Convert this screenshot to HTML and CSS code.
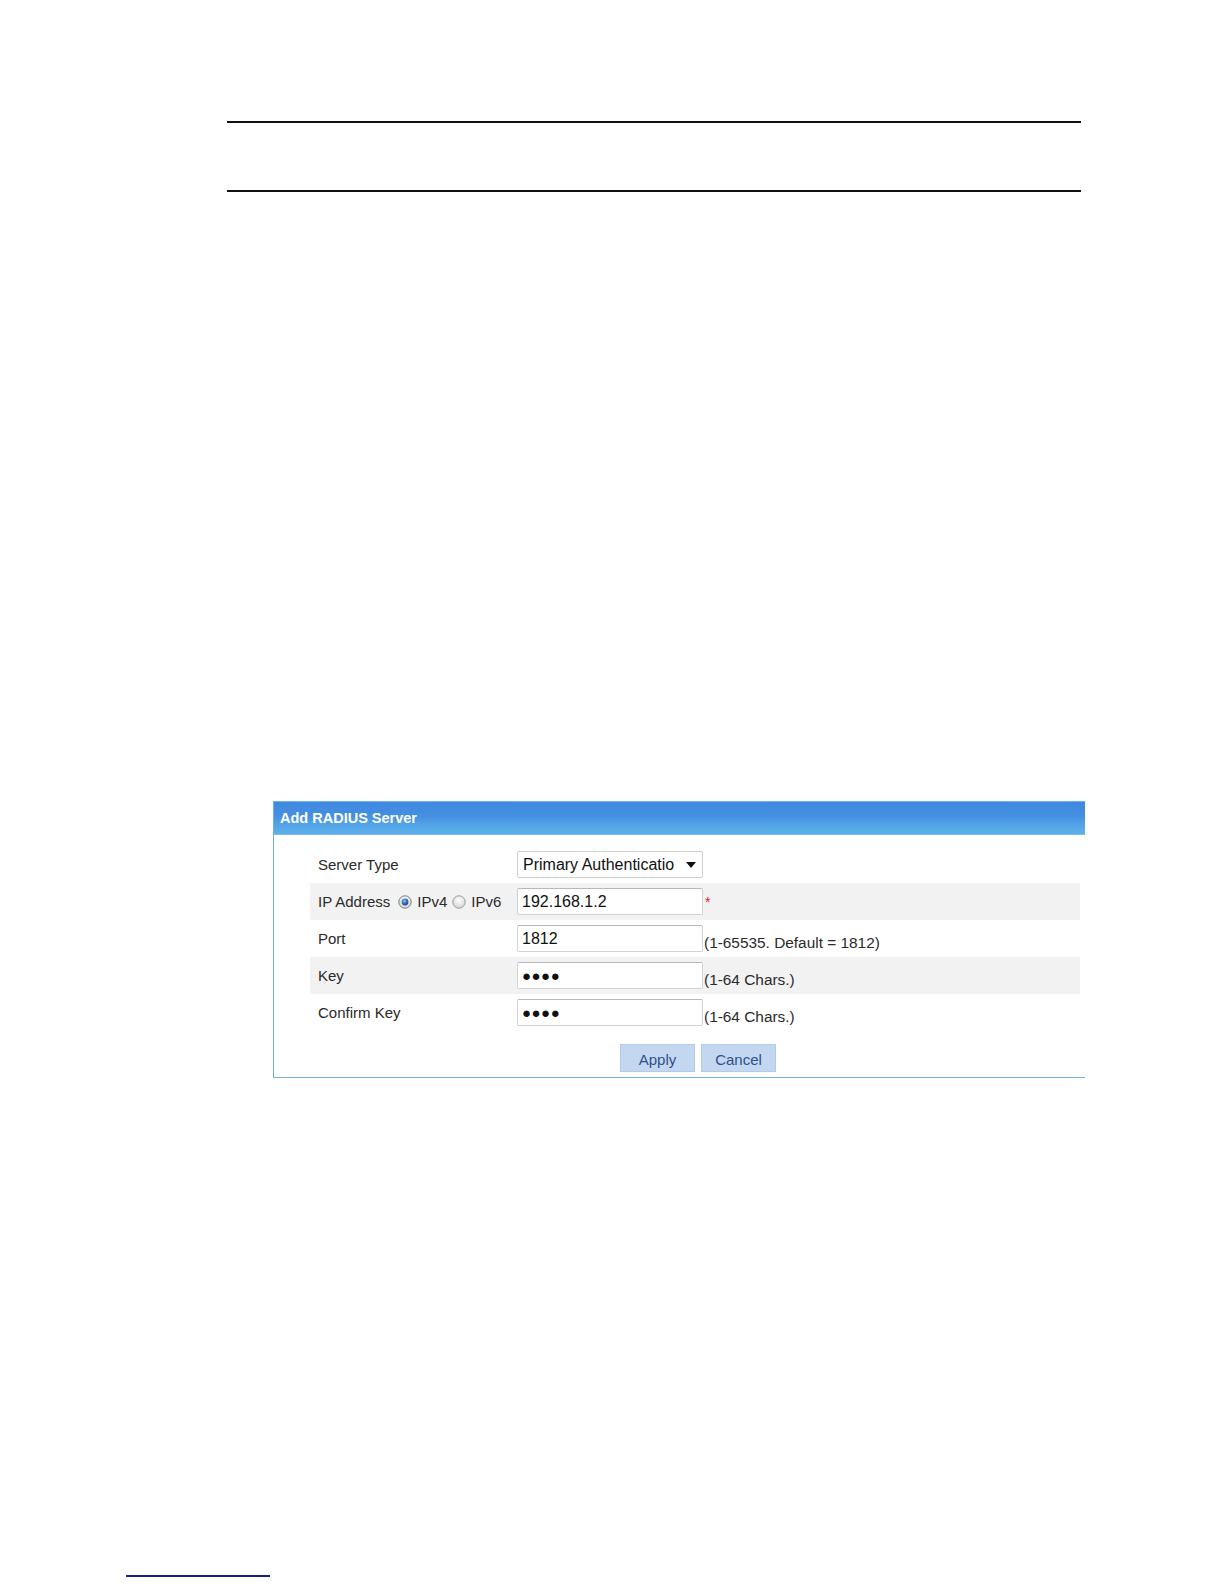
FILE: index.html
```html
<!DOCTYPE html>
<html>
<head>
  <meta charset="UTF-8">
  <title>Add RADIUS Server</title>
  <link rel="stylesheet" href="styles.css">
</head>
<body>
  <div class="page">
    <div class="header-rule"></div>

    <div class="dialog">
      <div class="dialog-title">Add RADIUS Server</div>
      <div class="dialog-body">
        <div class="row">
          <label class="field-label" for="serverType">Server Type</label>
          <div class="select-wrap">
            <select id="serverType" class="field">
              <option>Primary Authentication</option>
              <option>Primary Accounting</option>
              <option>Backup Authentication</option>
              <option>Backup Accounting</option>
            </select>
            <svg class="select-arrow" width="10" height="6" viewBox="0 0 10 6"><path d="M0 0 L10 0 L5 6 Z" fill="#111"/></svg>
          </div>
        </div>

        <div class="row alt">
          <div class="field-label">
            IP Address
            <span class="radio">
              <svg width="14" height="14" viewBox="0 0 14 14">
                <defs>
                  <radialGradient id="radioBg" cx="50%" cy="35%" r="65%">
                    <stop offset="0" stop-color="#ffffff"/>
                    <stop offset="1" stop-color="#d4d4d4"/>
                  </radialGradient>
                  <radialGradient id="radioDot" cx="40%" cy="35%" r="70%">
                    <stop offset="0" stop-color="#8fc1f0"/>
                    <stop offset="0.6" stop-color="#2b6cb0"/>
                    <stop offset="1" stop-color="#173f70"/>
                  </radialGradient>
                </defs>
                <circle cx="7" cy="7" r="6.2" fill="url(#radioBg)" stroke="#7f7f7f"/>
                <circle cx="7" cy="7" r="3.4" fill="url(#radioDot)"/>
              </svg>
              IPv4
            </span>
            <span class="radio">
              <svg width="14" height="14" viewBox="0 0 14 14">
                <circle cx="7" cy="7" r="6.2" fill="url(#radioBg)" stroke="#9a9a9a"/>
              </svg>
              IPv6
            </span>
          </div>
          <input class="field" type="text" value="192.168.1.2">
          <span class="required">*</span>
        </div>

        <div class="row">
          <label class="field-label" for="port">Port</label>
          <input id="port" class="field" type="text" value="1812">
          <span class="hint">(1-65535. Default = 1812)</span>
        </div>

        <div class="row alt">
          <label class="field-label" for="key">Key</label>
          <input id="key" class="field secret" type="text" value="●●●●">
          <span class="hint">(1-64 Chars.)</span>
        </div>

        <div class="row">
          <label class="field-label" for="confirmKey">Confirm Key</label>
          <input id="confirmKey" class="field secret" type="text" value="●●●●">
          <span class="hint">(1-64 Chars.)</span>
        </div>

        <div class="button-group">
          <button>Apply</button>
          <button>Cancel</button>
        </div>
      </div>
    </div>

    <div class="footnote-rule"></div>
  </div>
</body>
</html>
```

FILE: styles.css
```css
body {
  margin: 0;
  background-color: #fff;
  font-family: "Liberation Sans", Arial, sans-serif;
  color: #222;
}
.page {
  width: 1224px;
  padding-top: 121px;
}
.header-rule {
  margin-left: 227px;
  width: 854px;
  height: 67px;
  border-top: 2px solid #111;
  border-bottom: 2px solid #111;
}
.dialog {
  margin-top: 609px;
  margin-left: 273px;
  width: 811px;
  border: 1px solid #6db3e2;
  border-right: none;
}
.dialog-title {
  height: 32px;
  line-height: 32px;
  padding-left: 6px;
  color: #fff;
  font-size: 14.5px;
  font-weight: bold;
  background: linear-gradient(#3f88df 0%, #4590e2 45%, #52a3e7 70%, #5db0ea 100%);
  border-bottom: 1px solid #7cbdea;
}
.dialog-body {
  padding: 11px 5px 5px 36px;
}
.row {
  display: flex;
  align-items: center;
  height: 37px;
  font-size: 15px;
  color: #2a2a2a;
}
.row.alt {
  background-color: #f2f2f2;
}
.field-label {
  width: 207px;
  padding-left: 8px;
  box-sizing: border-box;
  display: flex;
  align-items: center;
  white-space: nowrap;
}
.radio {
  display: inline-flex;
  align-items: center;
  margin-left: 8px;
}
.radio svg {
  margin-right: 5px;
}
.radio + .radio {
  margin-left: 5px;
}
.field {
  width: 186px;
  height: 27px;
  box-sizing: border-box;
  margin: 0;
  padding: 0 4px;
  border: 1px solid #d2d2d2;
  border-top-color: #b8b8b8;
  border-radius: 2px;
  background: #fff;
  font-family: "Liberation Sans", Arial, sans-serif;
  font-size: 16px;
  color: #111;
  outline: none;
}
.secret {
  font-size: 15px;
  letter-spacing: 0.5px;
}
.select-wrap {
  position: relative;
}
select.field {
  appearance: none;
  -webkit-appearance: none;
  padding: 0 28px 0 5px;
  border-color: #cfcfcf;
}
.select-arrow {
  position: absolute;
  right: 7px;
  top: 11px;
  pointer-events: none;
}
.hint {
  margin-left: 1px;
  margin-top: 8px;
  font-size: 15.4px;
  white-space: nowrap;
}
.required {
  margin-left: 2px;
  color: #e0202a;
  font-size: 14px;
}
.button-group {
  display: flex;
  margin-top: 13px;
  padding-left: 310px;
}
.button-group button {
  width: 75px;
  height: 28px;
  margin-right: 6px;
  border: 1px solid #b3cbe9;
  background-color: #c4d7f0;
  color: #30508a;
  font-family: "Liberation Sans", Arial, sans-serif;
  font-size: 15px;
  padding: 2px 0 0;
  cursor: pointer;
}
.button-group button:hover {
  background-color: #b6cdec;
}
.footnote-rule {
  margin-top: 497px;
  margin-left: 126px;
  width: 144px;
  border-top: 2px solid #1c1c8c;
}
```
